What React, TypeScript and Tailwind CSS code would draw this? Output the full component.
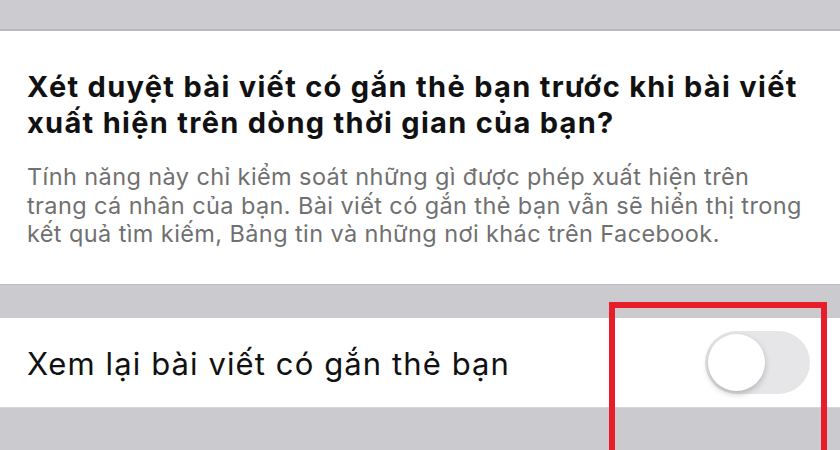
export default function App() {
  return (
    <main
      className="flex h-[450px] w-[840px] flex-col overflow-hidden bg-[#cacacf]"
      style={{ fontFamily: "Inter, 'Noto Sans', sans-serif" }}
    >
      <div className="h-[31px] shrink-0 border-b-2 border-[#b9b9be] bg-[#cbcbd0]" />

      <section className="flex h-[253px] shrink-0 flex-col bg-white px-[27px] pt-[38px]">
        <h1 className="whitespace-nowrap text-[29px] font-bold leading-[36px] tracking-[1.3px] text-[#111]">
          <span className="block">Xét duyệt bài viết có gắn thẻ bạn trước khi bài viết</span>
          <span className="block">xuất hiện trên dòng thời gian của bạn?</span>
        </h1>
        <p className="mt-[22px] whitespace-nowrap text-[23.5px] leading-[28.5px] tracking-[0.4px] text-[#707070]">
          <span className="block">Tính năng này chỉ kiểm soát những gì được phép xuất hiện trên</span>
          <span className="block">trang cá nhân của bạn. Bài viết có gắn thẻ bạn vẫn sẽ hiển thị trong</span>
          <span className="block">kết quả tìm kiếm, Bảng tin và những nơi khác trên Facebook.</span>
        </p>
      </section>

      <div className="h-[34px] shrink-0 border-t border-[#bdbdc2] bg-[#cacacf]" />

      <div className="relative flex-1">
        <div className="flex h-[90px] items-center justify-between border-b border-[#d6d6da] bg-white pl-[27px] pr-[30px]">
          <span className="whitespace-nowrap pt-[4px] text-[31px] tracking-[1.1px] text-[#111]">
            Xem lại bài viết có gắn thẻ bạn
          </span>
          <div className="flex h-[63px] w-[105px] items-center rounded-full bg-[#e6e6e9] p-[3px]">
            <div className="h-[57px] w-[57px] rounded-full bg-white shadow-[0_3px_6px_rgba(0,0,0,0.22)]" />
          </div>
        </div>
        <div className="absolute left-[609px] top-[-16px] h-[200px] w-[218px] border-[6px] border-[#e81d2a]" />
      </div>
    </main>
  );
}
